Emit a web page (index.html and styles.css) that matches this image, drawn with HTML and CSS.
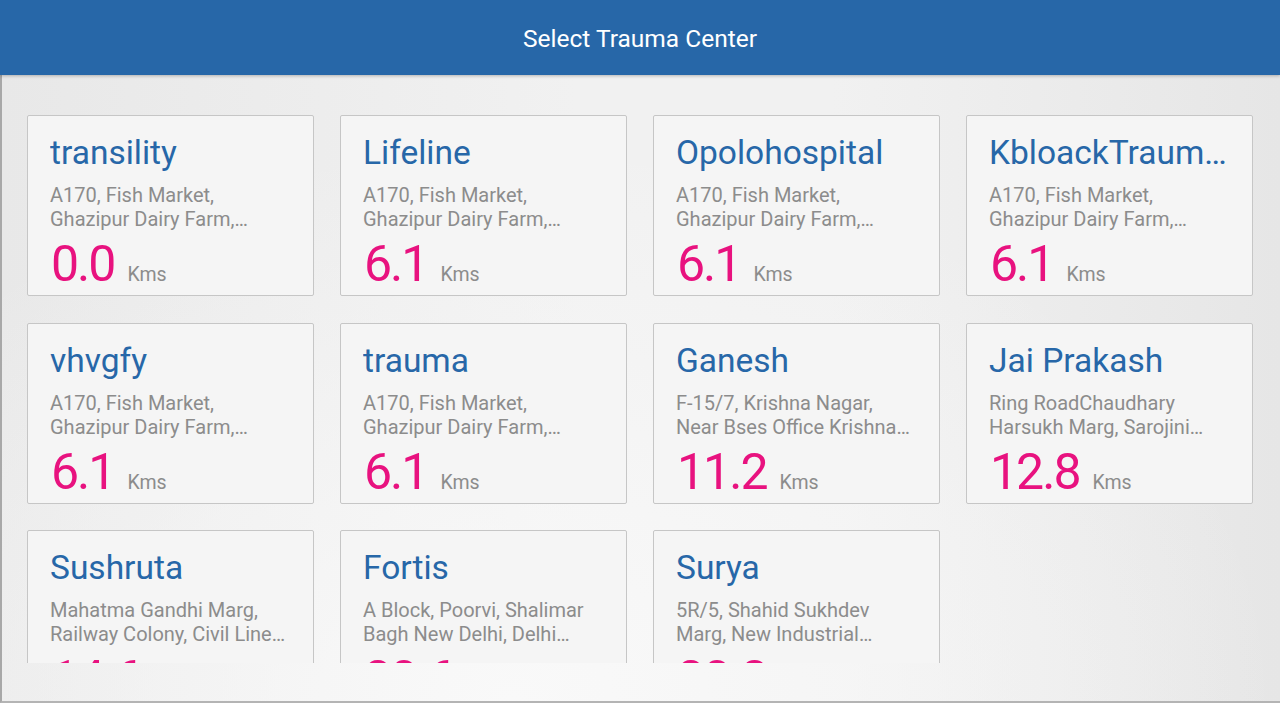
FILE: index.html
```html
<!DOCTYPE html>
<html lang="en">
<head>
<meta charset="utf-8">
<title>Select Trauma Center</title>
<link rel="stylesheet" href="styles.css">
</head>
<body>
<header class="appbar"><h1 class="appbar-title">Select Trauma Center</h1></header>
<main class="content">
  <div class="viewport">
    <div class="grid">
      <div class="card"><div class="name">transility</div><div class="addr">A170, Fish Market, Ghazipur Dairy Farm, Ghazipur, Delhi</div><div class="dist"><span class="num">0.0</span><span class="unit">Kms</span></div></div>
      <div class="card"><div class="name">Lifeline</div><div class="addr">A170, Fish Market, Ghazipur Dairy Farm, Ghazipur, Delhi</div><div class="dist"><span class="num">6.1</span><span class="unit">Kms</span></div></div>
      <div class="card"><div class="name">Opolohospital</div><div class="addr">A170, Fish Market, Ghazipur Dairy Farm, Ghazipur, Delhi</div><div class="dist"><span class="num">6.1</span><span class="unit">Kms</span></div></div>
      <div class="card"><div class="name">KbloackTraumaCenter</div><div class="addr">A170, Fish Market, Ghazipur Dairy Farm, Ghazipur, Delhi</div><div class="dist"><span class="num">6.1</span><span class="unit">Kms</span></div></div>
      <div class="card"><div class="name">vhvgfy</div><div class="addr">A170, Fish Market, Ghazipur Dairy Farm, Ghazipur, Delhi</div><div class="dist"><span class="num">6.1</span><span class="unit">Kms</span></div></div>
      <div class="card"><div class="name">trauma</div><div class="addr">A170, Fish Market, Ghazipur Dairy Farm, Ghazipur, Delhi</div><div class="dist"><span class="num">6.1</span><span class="unit">Kms</span></div></div>
      <div class="card"><div class="name">Ganesh</div><div class="addr">F-15/7, Krishna Nagar, Near Bses Office Krishna Nagar, Delhi</div><div class="dist"><span class="num">11.2</span><span class="unit">Kms</span></div></div>
      <div class="card"><div class="name">Jai Prakash</div><div class="addr">Ring RoadChaudhary Harsukh Marg, Sarojini Nagar, New Delhi</div><div class="dist"><span class="num">12.8</span><span class="unit">Kms</span></div></div>
      <div class="card"><div class="name">Sushruta</div><div class="addr">Mahatma Gandhi Marg, Railway Colony, Civil Lines, Delhi</div><div class="dist"><span class="num">14.6</span><span class="unit">Kms</span></div></div>
      <div class="card"><div class="name">Fortis</div><div class="addr">A Block, Poorvi, Shalimar Bagh New Delhi, Delhi 110088</div><div class="dist"><span class="num">20.6</span><span class="unit">Kms</span></div></div>
      <div class="card"><div class="name">Surya</div><div class="addr">5R/5, Shahid Sukhdev Marg, New Industrial Township, Faridabad</div><div class="dist"><span class="num">20.8</span><span class="unit">Kms</span></div></div>
    </div>
  </div>
</main>
</body>
</html>
```

FILE: styles.css
```css
* { box-sizing: border-box; }
html, body {
  margin: 0;
  padding: 0;
  height: 100%;
}
body {
  font-family: Roboto, "Noto Sans", "Liberation Sans", sans-serif;
  background: #ececec;
  display: flex;
  flex-direction: column;
  overflow: hidden;
}
.appbar {
  height: 75px;
  flex: none;
  background: #2767a8;
  display: flex;
  align-items: center;
  justify-content: center;
  position: relative;
  z-index: 2;
  box-shadow: 0 1px 3px rgba(0, 0, 0, 0.25);
}
.appbar-title {
  margin: 0;
  color: #ffffff;
  font-size: 24.5px;
  font-weight: 400;
  padding-top: 2px;
}
.content {
  flex: 1;
  border-left: 2px solid #a8a8a8;
  border-bottom: 2px solid #b4b4b4;
  background:
    radial-gradient(ellipse 60% 90% at 40% 100%, #f9f9f9 0%, rgba(249,249,249,0) 100%),
    linear-gradient(90deg, #e8e8e8 0%, #f1f1f1 45%, #f1f1f1 65%, #e6e6e6 100%);
}
.viewport {
  height: 588px;
  overflow: hidden;
  padding: 40px 0 0 25px;
}
.grid {
  display: grid;
  grid-template-columns: repeat(4, 287px);
  grid-auto-rows: 181px;
  column-gap: 26px;
  row-gap: 26.5px;
}
.card {
  background: #f5f5f5;
  border: 1px solid #c6c6c6;
  border-radius: 2px;
  padding: 17px 24px 0 22px;
  min-width: 0;
}
.name {
  font-size: 33.5px;
  line-height: 40px;
  color: #2767a8;
  white-space: nowrap;
  overflow: hidden;
  text-overflow: ellipsis;
}
.addr {
  margin-top: 10px;
  font-size: 20px;
  line-height: 24px;
  color: #8c8c8c;
  display: -webkit-box;
  -webkit-line-clamp: 2;
  -webkit-box-orient: vertical;
  overflow: hidden;
}
.dist {
  margin-top: 8px;
  display: flex;
  align-items: baseline;
  gap: 13px;
  padding-left: 1px;
}
.num {
  font-size: 50px;
  line-height: 50px;
  letter-spacing: -2px;
  color: #e8127f;
}
.unit {
  font-size: 19.5px;
  color: #8c8c8c;
}
```
